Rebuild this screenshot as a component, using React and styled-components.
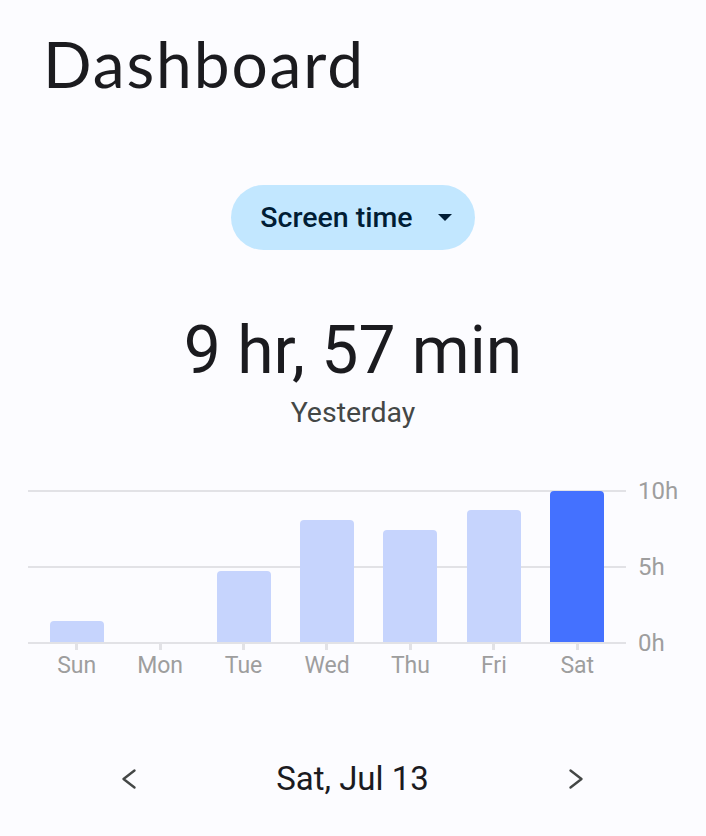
import React from "react";
import styled, { createGlobalStyle } from "styled-components";

const Global = createGlobalStyle`
  html, body { margin: 0; padding: 0; background: #fcfcff; }
  body { font-family: Roboto, "Noto Sans", sans-serif; -webkit-font-smoothing: antialiased; }
`;

const Page = styled.div`
  width: 706px;
  min-height: 836px;
  background: #fcfcff;
  display: flex;
  flex-direction: column;
`;

const Title = styled.h1`
  margin: 0;
  padding: 32px 0 0 43px;
  font-family: Lato, "Open Sans", sans-serif;
  font-weight: 400;
  font-size: 64px;
  line-height: 64px;
  color: #1b1b1f;
  letter-spacing: 1.9px;
`;

const PillRow = styled.div`
  display: flex;
  justify-content: center;
  margin-top: 89px;
`;

const Pill = styled.button`
  display: inline-flex;
  align-items: center;
  height: 65px;
  padding: 0 23px 0 29px;
  gap: 25px;
  border: none;
  border-radius: 33px;
  background: #c2e7ff;
  color: #001d35;
  font-family: Roboto, sans-serif;
  font-weight: 500;
  font-size: 28.5px;
  line-height: 32px;
  cursor: pointer;
`;

const Caret = styled.span`
  width: 0;
  height: 0;
  border-left: 7px solid transparent;
  border-right: 7px solid transparent;
  border-top: 7px solid #001d35;
`;

const Total = styled.div`
  margin-top: 63px;
  text-align: center;
  font-size: 66px;
  line-height: 76px;
  color: #1b1b1f;
`;

const Sub = styled.div`
  margin-top: 8px;
  text-align: center;
  font-size: 28.5px;
  line-height: 32px;
  color: #444746;
`;

const ChartRow = styled.div`
  display: flex;
  align-items: flex-start;
  padding: 0 28px;
  gap: 12px;
  margin-top: 61px;
`;

const ChartMain = styled.div`
  flex: 1;
  display: flex;
  flex-direction: column;
`;

const Plot = styled.div`
  height: 154px;
  box-sizing: border-box;
  padding: 0 7px 2px;
  display: grid;
  grid-template-columns: repeat(7, 1fr);
  align-items: end;
  background:
    linear-gradient(#e2e2e6, #e2e2e6) 0 0 / 100% 2px no-repeat,
    linear-gradient(#e2e2e6, #e2e2e6) 0 76px / 100% 2px no-repeat,
    linear-gradient(#e2e2e6, #e2e2e6) 0 152px / 100% 2px no-repeat;
`;

const Bar = styled.div`
  justify-self: center;
  width: 54px;
  border-radius: 4px 4px 0 0;
  background: ${(p) => (p.$active ? "#4471ff" : "#c6d4fd")};
`;

const XAxis = styled.div`
  padding: 0 7px;
  display: grid;
  grid-template-columns: repeat(7, 1fr);
`;

const XCell = styled.div`
  display: flex;
  flex-direction: column;
  align-items: center;
`;

const Tick = styled.div`
  width: 3px;
  height: 6px;
  background: #e2e2e6;
`;

const DayLabel = styled.div`
  margin-top: 3px;
  font-size: 23px;
  line-height: 26px;
  color: #9e9e9e;
`;

const YAxis = styled.div`
  margin-top: -11px;
  height: 176px;
  display: flex;
  flex-direction: column;
  justify-content: space-between;
  width: 40px;
`;

const YLabel = styled.div`
  font-size: 24px;
  line-height: 24px;
  color: #9e9e9e;
`;

const Nav = styled.div`
  display: flex;
  align-items: center;
  justify-content: space-between;
  padding: 0 116px 0 115px;
  margin-top: 80px;
`;

const NavButton = styled.button`
  width: 28px;
  height: 28px;
  padding: 0;
  border: none;
  background: transparent;
  display: flex;
  align-items: center;
  justify-content: center;
  cursor: pointer;
`;

const DateText = styled.div`
  font-size: 33px;
  line-height: 40px;
  color: #1b1b1f;
`;

const Chevron = ({ dir }) => (
  <svg width="28" height="28" viewBox="0 0 28 28">
    <polyline
      points={dir === "left" ? "19.5,5.5 8.5,14 19.5,22.5" : "8.5,5.5 19.5,14 8.5,22.5"}
      fill="none"
      stroke="#444746"
      strokeWidth="2.4"
      strokeLinecap="round"
      strokeLinejoin="round"
    />
  </svg>
);

const days = [
  { d: "Sun", v: 1.4 },
  { d: "Mon", v: 0 },
  { d: "Tue", v: 4.7 },
  { d: "Wed", v: 8.05 },
  { d: "Thu", v: 7.35 },
  { d: "Fri", v: 8.7 },
  { d: "Sat", v: 9.95, active: true },
];

export default function App() {
  return (
    <Page>
      <Global />
      <Title>Dashboard</Title>
      <PillRow>
        <Pill>
          Screen time
          <Caret />
        </Pill>
      </PillRow>
      <Total>9 hr, 57 min</Total>
      <Sub>Yesterday</Sub>
      <ChartRow>
        <ChartMain>
          <Plot>
            {days.map((x) => (
              <Bar key={x.d} $active={x.active} style={{ height: `${(x.v / 10) * 152}px` }} />
            ))}
          </Plot>
          <XAxis>
            {days.map((x) => (
              <XCell key={x.d}>
                <Tick />
                <DayLabel>{x.d}</DayLabel>
              </XCell>
            ))}
          </XAxis>
        </ChartMain>
        <YAxis>
          <YLabel>10h</YLabel>
          <YLabel>5h</YLabel>
          <YLabel>0h</YLabel>
        </YAxis>
      </ChartRow>
      <Nav>
        <NavButton aria-label="Previous day">
          <Chevron dir="left" />
        </NavButton>
        <DateText>Sat, Jul 13</DateText>
        <NavButton aria-label="Next day">
          <Chevron dir="right" />
        </NavButton>
      </Nav>
    </Page>
  );
}
